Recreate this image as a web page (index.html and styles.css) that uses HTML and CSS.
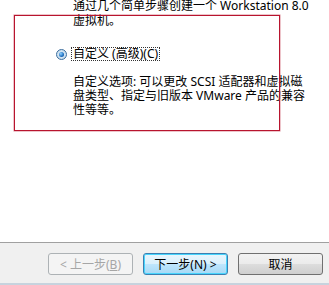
FILE: index.html
```html
<!DOCTYPE html>
<html lang="zh-CN">
<head>
    <meta charset="UTF-8">
    <title>新建虚拟机向导</title>
    <link rel="stylesheet" href="styles.css">
</head>
<body>
    <div class="wizard">
        <div class="content">
            <p class="intro">通过几个简单步骤创建一个 Workstation 8.0<br>虚拟机。</p>

            <label class="option">
                <span class="radio"><span class="dot"></span></span>
                <span class="option-label">自定义 (高级)(C)</span>
            </label>
            <p class="desc">自定义选项: 可以更改 SCSI 适配器和虚拟磁<br>盘类型、指定与旧版本 VMware 产品的兼容<br>性等等。</p>

            <!-- annotation box -->
            <div class="highlight"></div>
        </div>

        <div class="footer">
            <button class="btn" disabled>&lt; 上一步(<u>B</u>)</button>
            <button class="btn primary">下一步(N) &gt;</button>
            <button class="btn">取消</button>
        </div>
    </div>
</body>
</html>
```

FILE: styles.css
```css
body {
    margin: 0;
    padding: 0;
    background-color: #fff;
    font-family: "Noto Sans", "Noto Sans CJK SC", sans-serif;
    font-size: 12px;
    color: #000;
}

.wizard {
    width: 329px;
    height: 285px;
    display: flex;
    flex-direction: column;
    overflow: hidden;
}

.content {
    position: relative;
    height: 242px;
    background-color: #fff;
}

.intro {
    margin: -2px 0 0 73px;
    line-height: 15px;
}

.option {
    display: flex;
    align-items: center;
    margin: 19px 0 0 56px;
}

.radio {
    width: 9px;
    height: 9px;
    border: 1px solid #3c6e9e;
    border-radius: 50%;
    background: radial-gradient(circle, #e8f3fb 0%, #b9d4e8 100%);
    display: flex;
    align-items: center;
    justify-content: center;
}

.dot {
    width: 5px;
    height: 5px;
    border-radius: 50%;
    background: radial-gradient(circle at 35% 35%, #8fd0ff 0%, #1d6fc0 60%, #0e3f80 100%);
}

.option-label {
    margin-left: 4px;
    padding: 0 1px;
    border: 1px dotted #333;
    line-height: 12px;
}

.desc {
    margin: 14px 0 0 73px;
    line-height: 14px;
}

.highlight {
    position: absolute;
    left: 14px;
    top: 15px;
    width: 264px;
    height: 114px;
    border: 1px solid #b8142e;
    box-shadow: 0 0 0 0.5px rgba(184, 20, 46, 0.5);
}

.footer {
    flex: 1;
    background-color: #f0f0f0;
    border-top: 1px solid #a0a0a0;
    border-bottom: 2px solid #c7d3de;
    display: flex;
    justify-content: flex-end;
    align-items: flex-start;
    gap: 10px;
    padding: 10px 6px 0 0;
}

.btn {
    width: 85px;
    height: 22px;
    padding: 0;
    font-family: "Noto Sans", "Noto Sans CJK SC", sans-serif;
    font-size: 12px;
    color: #000;
    border: 1px solid #707070;
    border-radius: 3px;
    background: linear-gradient(#f2f2f2 0%, #ebebeb 50%, #dddddd 50%, #cfcfcf 100%);
}

.btn:disabled {
    color: #a6a6a6;
    border-color: #adb2b5;
    background: #f4f4f4;
}

.btn.primary {
    border-color: #3c7fb1;
    background: linear-gradient(#eaf6fd 0%, #d9f0fc 50%, #bee6fd 50%, #a7d9f5 100%);
    box-shadow: inset 0 0 0 1px #48d5fd;
}
```
